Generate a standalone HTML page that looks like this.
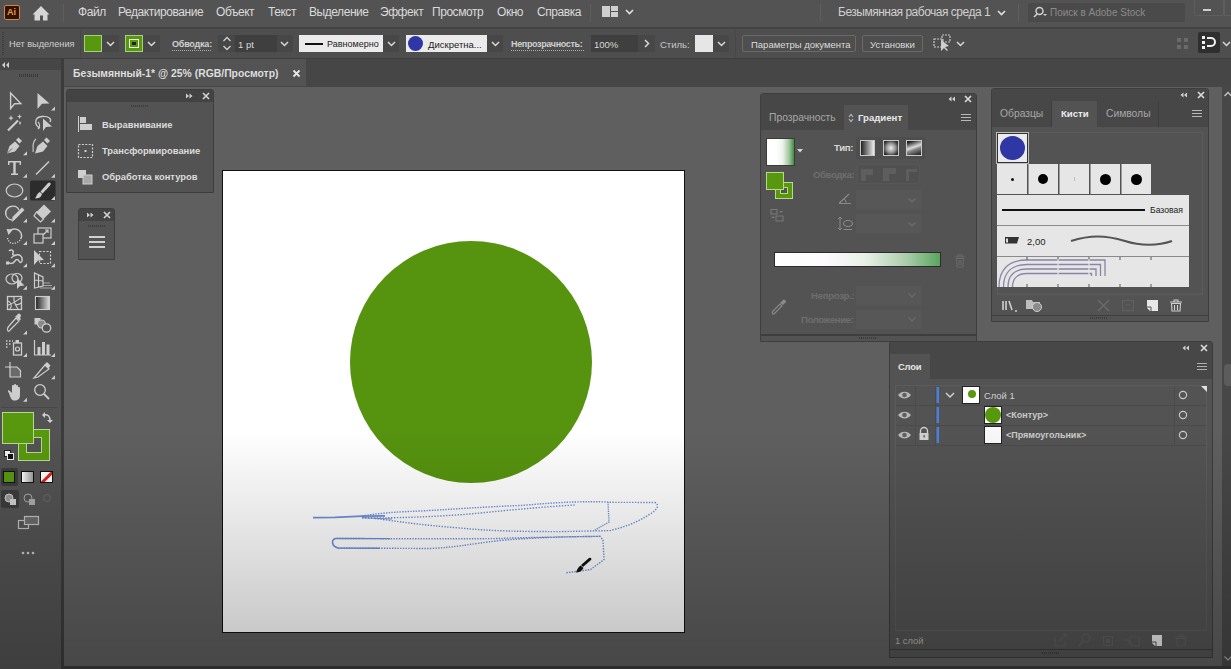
<!DOCTYPE html>
<html><head><meta charset="utf-8">
<style>
*{box-sizing:border-box;margin:0;padding:0}
html,body{width:1231px;height:669px;overflow:hidden;background:#4a4a4a;font-family:"Liberation Sans",sans-serif;color:#d6d6d6}
.a{position:absolute}
.t{position:absolute;white-space:nowrap;line-height:1}
svg{position:absolute;overflow:visible}
</style></head><body>

<!-- menu bar -->
<div class="a" id="menubar" style="left:0;top:0;width:1231px;height:27px;background:#535353"></div>

<!-- menu content -->
<div class="a" style="left:4px;top:5px;width:16px;height:15px;border:1.5px solid #d9863a;border-radius:2px;background:#2e1300"></div>
<div class="t" style="left:7px;top:8px;font-size:9px;font-weight:bold;color:#f19b3c">Ai</div>
<svg style="left:0;top:0" width="1" height="1"><path d="M32.5 14.5 L41 6 L49.5 14.5 L47.5 14.5 L47.5 20.5 L43 20.5 L43 15.5 L40 15.5 L40 20.5 L34.5 20.5 L34.5 14.5 Z" fill="#d6d6d6"/></svg>
<div class="a" style="left:63px;top:4px;width:1px;height:18px;background:#5e5e5e"></div>
<div class="t" style="left:78px;top:6px;font-size:12px;letter-spacing:-0.45px;color:#dadada">Файл</div>
<div class="t" style="left:118px;top:6px;font-size:12px;letter-spacing:-0.45px;color:#dadada">Редактирование</div>
<div class="t" style="left:216px;top:6px;font-size:12px;letter-spacing:-0.45px;color:#dadada">Объект</div>
<div class="t" style="left:268px;top:6px;font-size:12px;letter-spacing:-0.45px;color:#dadada">Текст</div>
<div class="t" style="left:309px;top:6px;font-size:12px;letter-spacing:-0.45px;color:#dadada">Выделение</div>
<div class="t" style="left:380px;top:6px;font-size:12px;letter-spacing:-0.45px;color:#dadada">Эффект</div>
<div class="t" style="left:432px;top:6px;font-size:12px;letter-spacing:-0.45px;color:#dadada">Просмотр</div>
<div class="t" style="left:497px;top:6px;font-size:12px;letter-spacing:-0.45px;color:#dadada">Окно</div>
<div class="t" style="left:537px;top:6px;font-size:12px;letter-spacing:-0.45px;color:#dadada">Справка</div>
<div class="a" style="left:590px;top:4px;width:1px;height:18px;background:#5e5e5e"></div>
<div class="a" style="left:602px;top:6px;width:8px;height:11px;background:#cfcfcf"></div>
<div class="a" style="left:611px;top:6px;width:7px;height:5px;background:#cfcfcf"></div>
<div class="a" style="left:611px;top:12px;width:7px;height:5px;background:#cfcfcf"></div>
<svg style="left:625px;top:9px" width="9" height="6"><path d="M1 1 L4.5 4.5 L8 1" stroke="#e0e0e0" stroke-width="1.6" fill="none"/></svg>
<div class="a" style="left:820px;top:4px;width:1px;height:18px;background:#5e5e5e"></div>
<div class="t" style="left:838px;top:6px;font-size:12px;letter-spacing:-0.5px;color:#cfcfcf">Безымянная рабочая среда 1</div>
<svg style="left:997px;top:10px" width="9" height="6"><path d="M1 1 L4.5 4.5 L8 1" stroke="#e0e0e0" stroke-width="1.6" fill="none"/></svg>
<div class="a" style="left:1018px;top:4px;width:1px;height:18px;background:#5e5e5e"></div>
<div class="a" style="left:1028px;top:3px;width:157px;height:19px;background:#4a4a4a;border-radius:2px"></div>
<svg style="left:1032px;top:6px" width="16" height="12"><circle cx="7.5" cy="5" r="3.5" stroke="#d0d0d0" stroke-width="1.5" fill="none"/><path d="M5 8 L2 11" stroke="#d0d0d0" stroke-width="1.6"/><path d="M11 8 L15 8 L13 10 Z" fill="#d0d0d0"/></svg>
<div class="t" style="left:1050px;top:8px;font-size:10px;color:#8a8a8a">Поиск в Adobe Stock</div>
<div class="a" style="left:1194px;top:-1px;width:30px;height:17px;border:1px solid #5e5e5e;border-radius:2px"></div>
<div class="a" style="left:1203px;top:9px;width:8px;height:2px;background:#cfcfcf"></div>
<div class="a" style="left:1224px;top:-1px;width:10px;height:17px;border:1px solid #5e5e5e"></div>
<!-- control bar -->
<div class="a" id="ctrlbar" style="left:0;top:27px;width:1231px;height:32px;background:#4e4e4e;border-top:2px solid #434343"></div>

<!-- control content -->
<div class="a" style="left:2px;top:32px;width:2px;height:24px;background:repeating-linear-gradient(#3e3e3e 0 1px,transparent 1px 2px)"></div>
<div class="t" style="left:9px;top:40px;font-size:9.2px;color:#cfcfcf">Нет выделения</div>
<div class="a" style="left:80px;top:31px;width:1px;height:26px;background:#474747"></div>
<div class="a" style="left:84px;top:35px;width:18px;height:17px;background:#58980f;border:1px solid #a8cf80"></div>
<div class="a" style="left:102px;top:35px;width:17px;height:17px;background:#474747"></div>
<svg style="left:106px;top:41px" width="9" height="6"><path d="M1 1 L4.5 4.5 L8 1" stroke="#d8d8d8" stroke-width="1.5" fill="none"/></svg>
<div class="a" style="left:125px;top:35px;width:18px;height:17px;background:#58980f;border:1px solid #a8cf80"></div>
<div class="a" style="left:129px;top:39px;width:10px;height:9px;border:1.5px solid #f0f0f0;background:#58980f"></div><div class="a" style="left:132px;top:42px;width:4px;height:3px;background:#222"></div>
<div class="a" style="left:143px;top:35px;width:17px;height:17px;background:#474747"></div>
<svg style="left:147px;top:41px" width="9" height="6"><path d="M1 1 L4.5 4.5 L8 1" stroke="#d8d8d8" stroke-width="1.5" fill="none"/></svg>
<div class="t" style="left:172px;top:40px;font-size:9px;font-weight:bold;letter-spacing:-0.2px;color:#d0d0d0">Обводка:</div>
<div class="a" style="left:172px;top:50px;width:40px;height:1px;background:repeating-linear-gradient(90deg,#aaa 0 1px,transparent 1px 2px)"></div>
<div class="a" style="left:218px;top:35px;width:75px;height:17px;background:#474747"></div>
<svg style="left:222px;top:36px" width="10" height="15"><path d="M1.5 5 L5 1.5 L8.5 5 M1.5 10 L5 13.5 L8.5 10" stroke="#d0d0d0" stroke-width="1.3" fill="none"/></svg>
<div class="a" style="left:235px;top:35px;width:42px;height:17px;background:#3f3f3f"></div>
<div class="t" style="left:238px;top:40px;font-size:9.5px;color:#d8d8d8">1 pt</div>
<svg style="left:280px;top:41px" width="9" height="6"><path d="M1 1 L4.5 4.5 L8 1" stroke="#d8d8d8" stroke-width="1.5" fill="none"/></svg>
<div class="a" style="left:299px;top:35px;width:84px;height:17px;background:#ebebeb"></div>
<div class="a" style="left:305px;top:43px;width:18px;height:2px;background:#111"></div>
<div class="t" style="left:327px;top:40px;font-size:9px;color:#222">Равномерно</div>
<div class="a" style="left:383px;top:35px;width:16px;height:17px;background:#474747"></div>
<svg style="left:387px;top:41px" width="9" height="6"><path d="M1 1 L4.5 4.5 L8 1" stroke="#d8d8d8" stroke-width="1.5" fill="none"/></svg>
<div class="a" style="left:406px;top:35px;width:81px;height:17px;background:#ebebeb"></div>
<div class="a" style="left:408px;top:36px;width:15px;height:15px;border-radius:50%;background:#2f36a6"></div>
<div class="t" style="left:428px;top:40px;font-size:9.5px;color:#222">Дискретна...</div>
<div class="a" style="left:487px;top:35px;width:16px;height:17px;background:#474747"></div>
<svg style="left:491px;top:41px" width="9" height="6"><path d="M1 1 L4.5 4.5 L8 1" stroke="#d8d8d8" stroke-width="1.5" fill="none"/></svg>
<div class="t" style="left:511px;top:40px;font-size:9px;font-weight:bold;letter-spacing:-0.35px;color:#d0d0d0">Непрозрачность:</div>
<div class="a" style="left:511px;top:50px;width:73px;height:1px;background:repeating-linear-gradient(90deg,#aaa 0 1px,transparent 1px 2px)"></div>
<div class="a" style="left:591px;top:35px;width:64px;height:17px;background:#474747"></div>
<div class="a" style="left:591px;top:35px;width:47px;height:17px;background:#3f3f3f"></div>
<div class="t" style="left:594px;top:40px;font-size:9.5px;color:#d8d8d8">100%</div>
<svg style="left:644px;top:39px" width="6" height="9"><path d="M1 1 L4.5 4.5 L1 8" stroke="#d8d8d8" stroke-width="1.5" fill="none"/></svg>
<div class="t" style="left:660px;top:40px;font-size:9.5px;color:#c8c8c8">Стиль:</div>
<div class="a" style="left:695px;top:35px;width:18px;height:17px;background:#e6e6e6"></div>
<div class="a" style="left:713px;top:35px;width:16px;height:17px;background:#474747"></div>
<svg style="left:717px;top:41px" width="9" height="6"><path d="M1 1 L4.5 4.5 L8 1" stroke="#d8d8d8" stroke-width="1.5" fill="none"/></svg>
<div class="a" style="left:735px;top:31px;width:1px;height:26px;background:#474747"></div>
<div class="a" style="left:742px;top:35px;width:114px;height:17px;border:1px solid #6a6a6a;border-radius:2px"></div>
<div class="t" style="left:751px;top:40px;font-size:9.5px;color:#dcdcdc">Параметры документа</div>
<div class="a" style="left:862px;top:35px;width:61px;height:17px;border:1px solid #6a6a6a;border-radius:2px"></div>
<div class="t" style="left:870px;top:40px;font-size:9.5px;color:#dcdcdc">Установки</div>
<svg style="left:933px;top:34px" width="20" height="18"><rect x="1" y="5" width="9" height="8" fill="none" stroke="#c8c8c8" stroke-width="1.2" stroke-dasharray="2 1"/><rect x="9" y="1" width="8" height="7" fill="none" stroke="#c8c8c8" stroke-width="1.2" stroke-dasharray="2 1"/><path d="M8 6 L8 17 L11 14 L14 17 L15 16 L12 13 L16 12 Z" fill="#d0d0d0"/></svg>
<svg style="left:956px;top:41px" width="9" height="6"><path d="M1 1 L4.5 4.5 L8 1" stroke="#d8d8d8" stroke-width="1.5" fill="none"/></svg>
<svg style="left:1176px;top:37px" width="14" height="14"><rect x="1" y="1" width="4" height="4" fill="#6a6a6a"/><rect x="8" y="1" width="4" height="4" fill="#6a6a6a"/><rect x="1" y="8" width="4" height="4" fill="#6a6a6a"/><rect x="8" y="8" width="4" height="4" fill="#6a6a6a"/></svg>
<div class="a" style="left:1198px;top:32px;width:22px;height:21px;background:#2f2f2f;border-radius:2px"></div>
<svg style="left:1201px;top:35px" width="16" height="16"><rect x="1" y="1" width="3" height="3" fill="#f0f0f0"/><rect x="1" y="6" width="3" height="3" fill="#f0f0f0"/><rect x="1" y="11" width="3" height="3" fill="#f0f0f0"/><path d="M6 3 L10 3 A4 4 0 0 1 10 11 L6 11" stroke="#f0f0f0" stroke-width="2" fill="none"/></svg>
<svg style="left:1222px;top:41px" width="9" height="6"><path d="M1 1 L4.5 4.5 L8 1" stroke="#d8d8d8" stroke-width="1.5" fill="none"/></svg>
<!-- tab bar -->
<div class="a" id="tabbar" style="left:0;top:59px;width:1231px;height:28px;background:#464646"></div>
<div class="a" style="left:64px;top:59px;width:242px;height:27px;background:#535353"></div>
<div class="a" style="left:0;top:58px;width:1231px;height:1px;background:#3e3e3e"></div>
<!-- canvas -->
<div class="a" id="canvas" style="left:64px;top:87px;width:1158px;height:582px;background:#5f5f5f"></div>
<!-- toolbar -->
<div class="a" id="toolbar" style="left:0;top:59px;width:61px;height:610px;background:#535353"></div>
<div class="a" style="left:0;top:59px;width:61px;height:11px;background:#464646"></div>
<div class="a" style="left:61px;top:59px;width:3px;height:610px;background:#3c3c3c"></div>
<!-- right dock -->
<div class="a" style="left:1222px;top:87px;width:9px;height:582px;background:#474747"></div>
<!-- artboard -->
<div class="a" id="artboard" style="left:222px;top:170px;width:463px;height:463px;background:#fff;border:1px solid #111"></div>
<div class="a" style="left:350px;top:241px;width:242px;height:242px;border-radius:50%;background:#56930f"></div>
<svg style="left:1px;top:61px" width="10" height="8"><path d="M4 1 L1 4 L4 7 Z M8 1 L5 4 L8 7 Z" fill="#d0d0d0"/></svg>
<div class="a" style="left:19px;top:74px;width:19px;height:3px;background:repeating-linear-gradient(90deg,#3a3a3a 0 1px,transparent 1px 2px)"></div>
<svg style="left:0;top:0" width="61" height="669"><path d="M10.6 93 L10.6 108.5 L14.6 103.8 L20.8 103.6 Z" fill="none" stroke="#cdcdcd" stroke-width="1.4" stroke-linejoin="miter"/><path d="M37.5 93 L37.5 109 L42 103.8 L49.5 103.5 Z" fill="#cdcdcd"/><path d="M55.0 106.5 L55.0 110.5 L51.0 110.5 Z" fill="#cdcdcd"/><path d="M8 130.5 L18 120.5" stroke="#cdcdcd" stroke-width="2.2"/><path d="M11 115 L11.8 117.5 L14 118 L11.8 118.7 L11 121 L10.2 118.7 L8 118 L10.2 117.5 Z" fill="#cdcdcd"/><path d="M19.5 114 L20.2 116 L22 116.5 L20.2 117.2 L19.5 119 L18.8 117.2 L17 116.5 L18.8 116 Z" fill="#cdcdcd"/><path d="M20 121 L21 123 L20 125 L19 123 Z" fill="#cdcdcd"/><path d="M40 128 C34 125 34 117 42 116.5 C49 116 52 119 50 122" fill="none" stroke="#cdcdcd" stroke-width="1.3"/><path d="M38 122 C40 124 40 127 38 129" fill="none" stroke="#cdcdcd" stroke-width="1.2"/><path d="M43 118.5 L43 131 L46 127 L52 126.5 Z" fill="#cdcdcd"/><path d="M7 153.5 L9.5 146 L15 141.5 L19.5 146 L15 151.5 Z" fill="#cdcdcd"/><path d="M16 140 L18.5 137.5 L22 141 L19.5 143.5 Z" fill="#cdcdcd"/><path d="M7.5 153 L12 148.5" stroke="#535353" stroke-width="0.9"/><path d="M27.0 151.3 L27.0 155.3 L23.0 155.3 Z" fill="#cdcdcd"/><path d="M35 153.5 L37.5 146 L43 141.5 L47.5 146 L43 151.5 Z" fill="#cdcdcd"/><path d="M44 140 L46.5 137.5 L50 141 L47.5 143.5 Z" fill="#cdcdcd"/><path d="M36 139 C31 143 34 148 33 152" fill="none" stroke="#cdcdcd" stroke-width="1.1"/><path d="M8 161 H21 V165 H19.6 V162.6 H15.7 V173.6 H18 V175 H11 V173.6 H13.3 V162.6 H9.4 V165 H8 Z" fill="#cdcdcd"/><path d="M27.0 173.7 L27.0 177.7 L23.0 177.7 Z" fill="#cdcdcd"/><path d="M36 174.5 L49 161.5" stroke="#cdcdcd" stroke-width="1.5"/><path d="M55.0 173.7 L55.0 177.7 L51.0 177.7 Z" fill="#cdcdcd"/><ellipse cx="14.5" cy="190.5" rx="8.3" ry="6.5" fill="#5a5a5a" stroke="#cdcdcd" stroke-width="1.2"/><path d="M27.0 196.1 L27.0 200.1 L23.0 200.1 Z" fill="#cdcdcd"/><rect x="30" y="180.5" width="25.5" height="20" rx="2" fill="#2c2c2c"/><path d="M49.5 182.5 C51 183 51 184 50 185.5 L42.5 193.5 L40.5 191.5 L48 183 Z" fill="#cdcdcd"/><path d="M40 192 L42 194 C41.5 197 39 198.5 35 198.5 C36.5 197 37 193 40 192 Z" fill="#cdcdcd"/><path d="M55.0 196.1 L55.0 200.1 L51.0 200.1 Z" fill="#cdcdcd"/><path d="M12 220 C6 219 4 213 7 209 C10 205 17 205 19 210" fill="#5a5a5a" stroke="#cdcdcd" stroke-width="1.3"/><path d="M12 222 L12.5 217 L22 207.5 L24.5 210 L15 219.5 Z" fill="#cdcdcd"/><path d="M27.0 218.5 L27.0 222.5 L23.0 222.5 Z" fill="#cdcdcd"/><path d="M44 204.5 L51 211.5 L43.5 219 L36.5 212 Z" fill="#cdcdcd"/><path d="M36.5 212 L43.5 219 L40.5 222 L34 216 Z" fill="none" stroke="#cdcdcd" stroke-width="1.2"/><path d="M55.0 218.5 L55.0 222.5 L51.0 222.5 Z" fill="#cdcdcd"/><path d="M10 230.5 C13 228 19 228.5 21 233 C22 236 21.5 238 20.5 239" fill="none" stroke="#cdcdcd" stroke-width="1.4"/><path d="M20 240 C18 243 14 244 11 243 C9 242 8 240 7.5 238" fill="none" stroke="#cdcdcd" stroke-width="1.3" stroke-dasharray="1.2 1.3"/><path d="M6.5 229 L13 229.5 L8.5 235 Z" fill="#cdcdcd"/><path d="M27.0 240.89999999999998 L27.0 244.89999999999998 L23.0 244.89999999999998 Z" fill="#cdcdcd"/><rect x="38" y="228" width="13" height="10" fill="none" stroke="#cdcdcd" stroke-width="1.2"/><rect x="34" y="234" width="9" height="9" fill="#535353" stroke="#cdcdcd" stroke-width="1.2"/><path d="M43 235 L48 230 M45 230 H48 V233" stroke="#cdcdcd" stroke-width="1.2" fill="none"/><path d="M55.0 240.89999999999998 L55.0 244.89999999999998 L51.0 244.89999999999998 Z" fill="#cdcdcd"/><path d="M9 251 C11 249 14 250 13 253 C12 255 14 256 16 255 C19 254 23 256 22 261 C21 263 20 263 19 261 C18 259 16 259 15 261 C13 264 10 264 8 262" fill="none" stroke="#cdcdcd" stroke-width="1.5"/><path d="M11 258 L15 255" stroke="#cdcdcd" stroke-width="1.2"/><rect x="6" y="261.5" width="3" height="3" fill="#cdcdcd"/><path d="M27.0 263.29999999999995 L27.0 267.29999999999995 L23.0 267.29999999999995 Z" fill="#cdcdcd"/><path d="M34 250 L34 265 L38 260.5 L44 260 Z" fill="#cdcdcd"/><rect x="39.5" y="251.5" width="11" height="12" fill="none" stroke="#cdcdcd" stroke-width="1.2" stroke-dasharray="2 1.5"/><path d="M55.0 263.29999999999995 L55.0 267.29999999999995 L51.0 267.29999999999995 Z" fill="#cdcdcd"/><ellipse cx="12" cy="279" rx="6" ry="5" fill="none" stroke="#cdcdcd" stroke-width="1.2"/><ellipse cx="17" cy="278" rx="5" ry="4.5" fill="none" stroke="#cdcdcd" stroke-width="1.2"/><path d="M17 278 L17 289 L20 286 L24.5 285.5 Z" fill="#cdcdcd"/><path d="M27.0 285.7 L27.0 289.7 L23.0 289.7 Z" fill="#cdcdcd"/><path d="M34.5 273 L34.5 288 L43 286 L43 277 Z M34.5 280 L43 281 M38.5 275 L38.5 287" fill="none" stroke="#cdcdcd" stroke-width="1.2"/><path d="M43 283 L50 283 M43 285.5 L52 285.5 M40 288 L52 288" stroke="#cdcdcd" stroke-width="1" opacity="0.7"/><path d="M55.0 285.7 L55.0 289.7 L51.0 289.7 Z" fill="#cdcdcd"/><rect x="7.5" y="296.5" width="14" height="13" fill="none" stroke="#cdcdcd" stroke-width="1.3"/><path d="M8 301 C12 303 12 306 10 309 M14 297 C13 302 16 306 18 309 M8 305 C13 304 17 300 21 298 M15 304 C17 305 19 305 21 303" fill="none" stroke="#cdcdcd" stroke-width="1.1"/><defs><linearGradient id="tg" x1="0" x2="1"><stop offset="0" stop-color="#222"/><stop offset="1" stop-color="#ddd"/></linearGradient></defs><rect x="35.5" y="296.5" width="14" height="13" fill="url(#tg)" stroke="#cdcdcd" stroke-width="1.1"/><path d="M8 331 C7 329 8 327 9 326 L16 318 L19 321 L11 329 C10 330 9 332 8 331 Z" fill="none" stroke="#cdcdcd" stroke-width="1.2"/><path d="M15.5 316.5 L18 314 C19 313 21 314 21 316 L20 318 L21 319 L19.5 320.5 L14.5 316 Z" fill="#cdcdcd"/><path d="M27.0 330.5 L27.0 334.5 L23.0 334.5 Z" fill="#cdcdcd"/><rect x="34.5" y="318" width="6" height="6.5" fill="#cdcdcd"/><circle cx="41.5" cy="324" r="4" fill="#8a8a8a" stroke="#cdcdcd" stroke-width="1.1"/><circle cx="46.5" cy="328" r="4.2" fill="#535353" stroke="#cdcdcd" stroke-width="1.3"/><rect x="13.5" y="343" width="8" height="12" fill="none" stroke="#cdcdcd" stroke-width="1.3"/><rect x="15.5" y="340" width="3.5" height="3" fill="#cdcdcd"/><circle cx="17.5" cy="349" r="2" fill="none" stroke="#cdcdcd" stroke-width="1.2"/><path d="M6 341 h1.5 M9 341 h1.5 M6 344 h1.5 M9 344 h1.5 M6 347 h1.5 M12 341 h1" stroke="#cdcdcd" stroke-width="1.4"/><path d="M27.0 352.9 L27.0 356.9 L23.0 356.9 Z" fill="#cdcdcd"/><path d="M34.5 340 V355 H51" fill="none" stroke="#cdcdcd" stroke-width="1.2"/><rect x="37.5" y="347" width="3" height="8" fill="#cdcdcd"/><rect x="42" y="342" width="3" height="13" fill="#cdcdcd"/><rect x="46.5" y="344.5" width="3" height="10.5" fill="#cdcdcd"/><path d="M55.0 352.9 L55.0 356.9 L51.0 356.9 Z" fill="#cdcdcd"/><path d="M10 362 V368 M5 367 H10" stroke="#cdcdcd" stroke-width="1.2"/><path d="M10 367 H17 L20.5 370.5 V377 H10 Z" fill="#6a6a6a" stroke="#cdcdcd" stroke-width="1.2"/><path d="M34 378 L45 365 L49 369 L38 377 Z" fill="none" stroke="#cdcdcd" stroke-width="1.2"/><path d="M44.5 364.5 L47 362 L50.5 365.5 L48.5 368.5 Z" fill="#cdcdcd"/><path d="M55.0 375.29999999999995 L55.0 379.29999999999995 L51.0 379.29999999999995 Z" fill="#cdcdcd"/><path d="M9 393 C7 391 8 389 10 391 L12 393 V386 C12 384.5 14 384.5 14 386 V385 C14 383.5 16 383.5 16 385 V386 C16 384.5 18 384.5 18 386 V388 C18 386.5 20 386.5 20 388 V395 C20 399 18 400.5 14.5 400.5 C11.5 400.5 10.5 398 9 393 Z" fill="#cdcdcd"/><path d="M27.0 397.7 L27.0 401.7 L23.0 401.7 Z" fill="#cdcdcd"/><circle cx="40" cy="390" r="5.3" fill="none" stroke="#cdcdcd" stroke-width="1.3"/><path d="M44 394 L49 399" stroke="#cdcdcd" stroke-width="1.8"/></svg>
<div class="a" style="left:1px;top:407px;width:56px;height:1px;background:#474747"></div>
<div class="a" style="left:18px;top:429px;width:32px;height:32px;background:#58980f;border:1px solid #b5d98c"></div>
<div class="a" style="left:26px;top:437px;width:16px;height:16px;background:#535353;border:1px solid #b5d98c"></div>
<div class="a" style="left:2px;top:412px;width:32px;height:32px;background:#58980f;border:1px solid #b5d98c"></div>
<svg style="left:41px;top:411px" width="12" height="12"><path d="M2 4 C7 3 9 5 9 10" fill="none" stroke="#d0d0d0" stroke-width="1.4"/><path d="M1 4 L4 1 L4 7 Z M6 9 L12 9 L9 12 Z" fill="#d0d0d0"/></svg>
<div class="a" style="left:4px;top:450px;width:7px;height:7px;background:#f0f0f0;border:1px solid #222"></div>
<div class="a" style="left:7px;top:453px;width:7px;height:7px;background:#111;border:1px solid #eee"></div>
<div class="a" style="left:1px;top:468px;width:17px;height:18px;background:#3c3c3c;border-radius:2px"></div>
<div class="a" style="left:3px;top:471px;width:12px;height:12px;background:#58980f;border:1px solid #111"></div>
<div class="a" style="left:21px;top:471px;width:13px;height:12px;background:linear-gradient(90deg,#fff,#9a9a9a);border:1px solid #111"></div>
<div class="a" style="left:40px;top:471px;width:13px;height:12px;background:#fff;border:1px solid #111;overflow:hidden"><div class="a" style="left:-3px;top:4px;width:18px;height:2.5px;background:#e0201a;transform:rotate(-45deg)"></div></div>
<div class="a" style="left:1px;top:490px;width:18px;height:18px;background:#3c3c3c;border-radius:2px"></div>
<svg style="left:0;top:0" width="61" height="669"><circle cx="9" cy="498" r="4" fill="#999" stroke="#d0d0d0" stroke-width="1"/><rect x="10" y="499" width="6" height="6" fill="#d0d0d0"/><circle cx="28" cy="498" r="4" fill="none" stroke="#aaa" stroke-width="1"/><rect x="29" y="499" width="6" height="6" fill="#aaa"/><circle cx="47" cy="498" r="3.5" fill="none" stroke="#6a6a6a" stroke-width="1"/>
<rect x="18.5" y="520.5" width="10" height="8" fill="none" stroke="#c0c0c0" stroke-width="1.2"/><rect x="24.5" y="516.5" width="14" height="8" fill="#6a6a6a" stroke="#c0c0c0" stroke-width="1.2"/>
<circle cx="23" cy="553" r="1.3" fill="#c8c8c8"/><circle cx="28" cy="553" r="1.3" fill="#c8c8c8"/><circle cx="33" cy="553" r="1.3" fill="#c8c8c8"/></svg>
<div class="t" style="left:73px;top:69px;font-size:10.4px;font-weight:bold;color:#dedede">Безымянный-1* @ 25% (RGB/Просмотр)</div>
<svg style="left:292px;top:69px" width="9" height="9"><path d="M1.5 1.5 L7.5 7.5 M7.5 1.5 L1.5 7.5" stroke="#e8e8e8" stroke-width="1.8"/></svg>
<div class="a" style="left:66px;top:89px;width:148px;height:104px;background:#535353;border:1px solid #3d3d3d;border-radius:3px 3px 0 0"></div>
<div class="a" style="left:67px;top:90px;width:146px;height:12px;background:#434343;border-radius:2px 2px 0 0"></div>
<svg style="left:185px;top:93px" width="8" height="6"><path d="M1 0.5 L4 3 L1 5.5 Z M4.5 0.5 L7.5 3 L4.5 5.5 Z" fill="#d0d0d0"/></svg>
<svg style="left:202px;top:92px" width="8" height="8"><path d="M1 1 L7 7 M7 1 L1 7" stroke="#d0d0d0" stroke-width="1.7"/></svg>
<div class="a" style="left:131px;top:105px;width:18px;height:2px;background:repeating-linear-gradient(90deg,#3d3d3d 0 1px,transparent 1px 2px)"></div>
<svg style="left:0;top:0" width="230" height="270"><rect x="78" y="116" width="1" height="16" fill="#cfcfcf"/><rect x="80" y="117" width="6" height="6" fill="#cfcfcf"/><rect x="80" y="124" width="12" height="6" fill="#cfcfcf"/><rect x="78.5" y="144.5" width="14" height="13" fill="none" stroke="#cfcfcf" stroke-width="1.2" stroke-dasharray="2 1.4"/><rect x="84.5" y="150" width="2" height="2" fill="#cfcfcf"/><rect x="78" y="170" width="8" height="8" fill="#cfcfcf"/><rect x="83" y="175" width="9" height="9" fill="#a8a8a8" stroke="#cfcfcf" stroke-width="1"/></svg>
<div class="t" style="left:102px;top:120px;font-size:9.4px;font-weight:bold;color:#dcdcdc">Выравнивание</div>
<div class="t" style="left:102px;top:146px;font-size:9.4px;font-weight:bold;color:#dcdcdc">Трансформирование</div>
<div class="t" style="left:102px;top:172px;font-size:9.4px;font-weight:bold;color:#dcdcdc">Обработка контуров</div>
<div class="a" style="left:78px;top:208px;width:37px;height:52px;background:#535353;border:1px solid #3d3d3d;border-radius:3px 3px 0 0"></div>
<div class="a" style="left:79px;top:209px;width:35px;height:12px;background:#434343;border-radius:2px 2px 0 0"></div>
<svg style="left:86px;top:212px" width="8" height="6"><path d="M1 0.5 L4 3 L1 5.5 Z M4.5 0.5 L7.5 3 L4.5 5.5 Z" fill="#d0d0d0"/></svg>
<svg style="left:103px;top:211px" width="8" height="8"><path d="M1 1 L7 7 M7 1 L1 7" stroke="#d0d0d0" stroke-width="1.7"/></svg>
<div class="a" style="left:88px;top:225px;width:18px;height:2px;background:repeating-linear-gradient(90deg,#3d3d3d 0 1px,transparent 1px 2px)"></div>
<div class="a" style="left:89px;top:236px;width:16px;height:2px;background:#d0d0d0"></div>
<div class="a" style="left:89px;top:241px;width:16px;height:2px;background:#d0d0d0"></div>
<div class="a" style="left:89px;top:246px;width:16px;height:2px;background:#d0d0d0"></div>
<div class="a" style="left:760px;top:93px;width:217px;height:249px;background:#535353;border:1px solid #3e3e3e;border-radius:3px 3px 0 0"></div>
<div class="a" style="left:761px;top:94px;width:215px;height:11px;background:#474747;border-radius:2px 2px 0 0"></div>
<div class="a" style="left:761px;top:105px;width:215px;height:25px;background:#474747"></div>
<div class="a" style="left:844px;top:105px;width:64px;height:25px;background:#535353"></div>
<div class="a" style="left:761px;top:334px;width:215px;height:2px;background:#3e3e3e"></div>
<div class="a" style="left:859px;top:337px;width:18px;height:2px;background:repeating-linear-gradient(90deg,#3d3d3d 0 1px,transparent 1px 2px)"></div>
<svg style="left:948px;top:96px" width="8" height="6"><path d="M3.5 0.5 L0.5 3 L3.5 5.5 Z M7 0.5 L4 3 L7 5.5 Z" fill="#d0d0d0"/></svg>
<svg style="left:964px;top:95px" width="8" height="8"><path d="M1 1 L7 7 M7 1 L1 7" stroke="#d8d8d8" stroke-width="1.7"/></svg>
<div class="t" style="left:769px;top:113px;font-size:10.3px;color:#a8a8a8">Прозрачность</div>
<svg style="left:848px;top:113px" width="6" height="10"><path d="M1 4 L3 1.5 L5 4 M1 6 L3 8.5 L5 6" stroke="#bbb" stroke-width="1.1" fill="none"/></svg>
<div class="t" style="left:858px;top:113px;font-size:9.6px;font-weight:bold;color:#e8e8e8">Градиент</div>
<div class="a" style="left:961px;top:114px;width:10px;height:1px;background:#b8b8b8;box-shadow:0 3px 0 #b8b8b8,0 6px 0 #b8b8b8"></div>
<div class="a" style="left:766px;top:138px;width:29px;height:28px;background:linear-gradient(90deg,#fff 0,#fff 35%,#eef3ec 58%,#9fc59e 82%,#3f8c3f 100%);border:1px solid #3a3a3a"></div>
<svg style="left:797px;top:149px" width="6" height="4"><path d="M0 0 L6 0 L3 3.5 Z" fill="#d8d8d8"/></svg>
<div class="a" style="left:775px;top:182px;width:18px;height:17px;background:#58980f;border:1px solid #b5d98c"></div>
<div class="a" style="left:780px;top:187px;width:8px;height:7px;background:#535353;border:1px solid #b5d98c"></div>
<div class="a" style="left:766px;top:172px;width:18px;height:18px;background:#58980f;border:1px solid #b5d98c"></div>
<svg style="left:770px;top:209px" width="16" height="14"><rect x="1" y="0.5" width="6" height="4.5" fill="none" stroke="#7a7a7a"/><path d="M9 2 L13 2 L11 4 Z M1 9 L3 7 L5 9 Z" fill="#7a7a7a"/><rect x="6" y="7" width="7" height="5" fill="none" stroke="#7a7a7a"/></svg>
<div class="t" style="left:834px;top:143px;font-size:9.6px;font-weight:bold;color:#d8d8d8;letter-spacing:-0.3px">Тип:</div>
<div class="a" style="left:856px;top:137px;width:69px;height:22px;background:#4e4e4e;border-radius:2px"></div>
<div class="a" style="left:860px;top:140px;width:15px;height:16px;background:linear-gradient(90deg,#222,#eee);border:1px solid #c8c8c8"></div>
<div class="a" style="left:883px;top:140px;width:16px;height:16px;background:radial-gradient(circle,#eee 0,#999 45%,#333 80%);border:1px solid #c8c8c8"></div>
<div class="a" style="left:906px;top:140px;width:16px;height:16px;background:linear-gradient(160deg,#222 10%,#ddd 45%,#888 60%,#333 90%);border:1px solid #c8c8c8"></div>
<div class="t" style="left:813px;top:170px;font-size:9.6px;font-weight:bold;color:#6e6e6e;letter-spacing:-0.4px">Обводка:</div>
<div class="a" style="left:857px;top:164px;width:63px;height:20px;background:#505050;border:1px solid #575757;border-radius:2px"></div>
<svg style="left:0;top:0" width="1" height="1"><path d="M861 181 V169 H873 V175 H866 V181 Z M883 181 V168 L896 168 V174 H889 V181" fill="#5e5e5e"/><path d="M906 181 V169 H917 V172 H909 V181 Z" fill="#5e5e5e"/></svg>
<svg style="left:838px;top:192px" width="14" height="13"><path d="M1 11.5 H13 M1 11.5 L11 2" stroke="#8a8a8a" stroke-width="1.2" fill="none"/><path d="M6 7 C8 8 8 10 8 11.5" stroke="#8a8a8a" fill="none"/></svg>
<div class="a" style="left:856px;top:190px;width:65px;height:19px;background:#575757"></div>
<svg style="left:908px;top:198px" width="8" height="5"><path d="M0.5 0.5 L4 4 L7.5 0.5" stroke="#6e6e6e" stroke-width="1.1" fill="none"/></svg>
<svg style="left:837px;top:216px" width="16" height="15"><path d="M3 1 V14 M1 3 L3 1 L5 3 M1 12 L3 14 L5 12" stroke="#8a8a8a" stroke-width="1" fill="none"/><ellipse cx="11" cy="7.5" rx="4.5" ry="3" fill="none" stroke="#8a8a8a" stroke-width="1.1"/><path d="M6.5 13.5 H15" stroke="#8a8a8a"/></svg>
<div class="a" style="left:856px;top:214px;width:65px;height:19px;background:#575757"></div>
<svg style="left:908px;top:222px" width="8" height="5"><path d="M0.5 0.5 L4 4 L7.5 0.5" stroke="#6e6e6e" stroke-width="1.1" fill="none"/></svg>
<div class="a" style="left:774px;top:252px;width:167px;height:15px;background:linear-gradient(90deg,#fff 0,#fdfbfd 30%,#e8f0e6 55%,#a9ccaa 80%,#5aa55e);border:1px solid #2c2c2c"></div>
<svg style="left:954px;top:254px" width="12" height="14"><path d="M1 3 H11 M4 3 V1 H8 V3 M2.5 4.5 H9.5 L9 13 H3 Z" stroke="#6a6a6a" stroke-width="1" fill="none"/><path d="M5 6 V11 M7 6 V11" stroke="#6a6a6a"/></svg>
<div class="t" style="left:811px;top:291px;font-size:9.6px;font-weight:bold;color:#6e6e6e;letter-spacing:-0.3px">Непрозр.:</div>
<div class="a" style="left:856px;top:286px;width:65px;height:19px;background:#575757"></div>
<svg style="left:908px;top:293px" width="8" height="5"><path d="M0.5 0.5 L4 4 L7.5 0.5" stroke="#6e6e6e" stroke-width="1.1" fill="none"/></svg>
<div class="t" style="left:801px;top:315px;font-size:9.6px;font-weight:bold;color:#6e6e6e;letter-spacing:-0.4px">Положение:</div>
<div class="a" style="left:856px;top:310px;width:65px;height:19px;background:#575757"></div>
<svg style="left:908px;top:317px" width="8" height="5"><path d="M0.5 0.5 L4 4 L7.5 0.5" stroke="#6e6e6e" stroke-width="1.1" fill="none"/></svg>
<svg style="left:771px;top:299px" width="16" height="17"><path d="M2 15 C1 14 1 13 2 12 L9 5 L11 7 L4 14 C3 15 2.5 15.5 2 15 Z" fill="none" stroke="#8a8a8a" stroke-width="1.1"/><path d="M9 4 L12 1 C13 0 15 1 15 3 L12 6 Z" fill="#8a8a8a"/></svg>
<div class="a" style="left:991px;top:88px;width:218px;height:234px;background:#535353;border:1px solid #3e3e3e;border-radius:3px 3px 0 0"></div>
<div class="a" style="left:992px;top:89px;width:216px;height:12px;background:#474747;border-radius:2px 2px 0 0"></div>
<div class="a" style="left:992px;top:101px;width:216px;height:26px;background:#474747"></div>
<div class="a" style="left:1052px;top:101px;width:45px;height:26px;background:#535353"></div>
<div class="a" style="left:1158px;top:101px;width:1px;height:26px;background:#3e3e3e"></div>
<div class="a" style="left:1051px;top:101px;width:1px;height:26px;background:#3e3e3e"></div>
<svg style="left:1180px;top:92px" width="8" height="6"><path d="M3.5 0.5 L0.5 3 L3.5 5.5 Z M7 0.5 L4 3 L7 5.5 Z" fill="#d0d0d0"/></svg>
<svg style="left:1197px;top:91px" width="8" height="8"><path d="M1 1 L7 7 M7 1 L1 7" stroke="#d8d8d8" stroke-width="1.7"/></svg>
<div class="t" style="left:1000px;top:109px;font-size:10.3px;color:#a8a8a8">Образцы</div>
<div class="t" style="left:1061px;top:109px;font-size:9.6px;font-weight:bold;color:#ececec">Кисти</div>
<div class="t" style="left:1106px;top:109px;font-size:10.3px;color:#a8a8a8">Символы</div>
<div class="a" style="left:1192px;top:110px;width:10px;height:1px;background:#b8b8b8;box-shadow:0 3px 0 #b8b8b8,0 6px 0 #b8b8b8"></div>
<div class="a" style="left:997px;top:132px;width:206px;height:163px;border:1px solid #5c5c5c"></div>
<div class="a" style="left:997px;top:133px;width:31px;height:30px;background:#ebebeb;border:1px solid #333;outline:1px solid #bdbdbd"></div>
<div class="a" style="left:1000px;top:136px;width:25px;height:24px;border-radius:50%;background:#2e37a4"></div>
<div class="a" style="left:997px;top:164px;width:30px;height:30px;background:#e6e6e6"></div>
<div class="a" style="left:1028px;top:164px;width:30px;height:30px;background:#e6e6e6"></div>
<div class="a" style="left:1059px;top:164px;width:30px;height:30px;background:#e6e6e6"></div>
<div class="a" style="left:1090px;top:164px;width:30px;height:30px;background:#e6e6e6"></div>
<div class="a" style="left:1121px;top:164px;width:30px;height:30px;background:#e6e6e6"></div>
<div class="a" style="left:1011px;top:178px;width:3px;height:3px;border-radius:50%;background:#111"></div>
<div class="a" style="left:1038px;top:174px;width:10px;height:10px;border-radius:50%;background:#000"></div>
<div class="a" style="left:1074px;top:177px;width:1px;height:4px;background:#bbb"></div>
<div class="a" style="left:1100px;top:174px;width:11px;height:11px;border-radius:50%;background:#000"></div>
<div class="a" style="left:1131px;top:174px;width:11px;height:11px;border-radius:50%;background:#000"></div>
<div class="a" style="left:1028px;top:164px;width:1px;height:30px;background:#9a9a9a"></div>
<div class="a" style="left:1059px;top:164px;width:1px;height:30px;background:#9a9a9a"></div>
<div class="a" style="left:1090px;top:164px;width:1px;height:30px;background:#9a9a9a"></div>
<div class="a" style="left:1121px;top:164px;width:1px;height:30px;background:#9a9a9a"></div>
<div class="a" style="left:997px;top:195px;width:192px;height:30px;background:#e6e6e6"></div>
<div class="a" style="left:1002px;top:209px;width:143px;height:2px;background:#111"></div>
<div class="t" style="left:1150px;top:206px;font-size:8.6px;color:#222">Базовая</div>
<div class="a" style="left:997px;top:225px;width:192px;height:1px;background:#8a8a8a"></div>
<div class="a" style="left:997px;top:226px;width:192px;height:30px;background:#e6e6e6"></div>
<svg style="left:1004px;top:236px" width="18" height="9"><path d="M1 1 H15 L13 7.5 H1 Z" fill="#333"/><rect x="2" y="2.5" width="2" height="4" fill="#ddd"/></svg>
<div class="t" style="left:1027px;top:237px;font-size:9.5px;color:#222">2,00</div>
<svg style="left:1070px;top:233px" width="104" height="16"><path d="M1 8 C20 2 35 2 55 8 C70 13 88 13 102 8" stroke="#555" stroke-width="2.2" fill="none"/></svg>
<div class="a" style="left:997px;top:256px;width:192px;height:1px;background:#8a8a8a"></div>
<div class="a" style="left:997px;top:257px;width:192px;height:30px;background:#e6e6e6"></div>
<svg style="left:997px;top:257px" width="192" height="30"><g fill="none" stroke="#8a84a6" stroke-width="1.3"><path d="M2 30 C2 12 12 3 30 3 H93 M6.5 30 C6.5 15 15 7.5 30 7.5 H93 M11 30 C11 18 18 12 30 12 H93 M15.5 30 C15.5 21 21 16.5 30 16.5 H93"/><path d="M93 3 H108 V19 M93 7.5 H103.5 V19 M93 12 H99 V19 M93 16.5 H94.5 V19"/></g><path d="M30 0 V3 M61 0 V3 M92 0 V3 M123 0 V3 M154 0 V3 M30 27 V30 M61 27 V30 M92 27 V30 M123 27 V30 M154 27 V30" stroke="#555" stroke-width="1"/><path d="M61 2 V18 M92 2 V18" stroke="#e6e6e6" stroke-width="1.2"/></svg>
<svg style="left:0;top:0" width="1" height="1"><path d="M1003 310 V301 M1006 310 V301 M1009 301 L1012 310 M1015 311 H1017" stroke="#cfcfcf" stroke-width="1.6" fill="none"/><path d="M1026 300 H1032 L1033 302 H1040 V309 H1026 Z" fill="#bdbdbd"/><circle cx="1037" cy="307" r="4.5" fill="#8a8a8a" stroke="#cfcfcf" stroke-width="1"/><path d="M1098 300 L1109 311 M1109 300 L1098 311" stroke="#6a6a6a" stroke-width="1.5"/><rect x="1122.5" y="300.5" width="11" height="10" fill="none" stroke="#606060" stroke-width="1"/><path d="M1125 305 H1131" stroke="#606060"/><path d="M1147 300 H1158 V311 H1150 L1147 308 Z" fill="#e8e8e8"/><path d="M1147 307 H1151 V311" stroke="#535353" stroke-width="1" fill="none"/><path d="M1170 302 H1182 M1174 302 V300 H1178 V302 M1171.5 303.5 H1180.5 L1180 311 H1172 Z M1174.5 305 V310 M1177.5 305 V310" stroke="#cfcfcf" stroke-width="1.1" fill="none"/></svg>
<div class="a" style="left:992px;top:315px;width:216px;height:1px;background:#3e3e3e"></div>
<div class="a" style="left:1090px;top:317px;width:18px;height:2px;background:repeating-linear-gradient(90deg,#3d3d3d 0 1px,transparent 1px 2px)"></div>
<div class="a" style="left:889px;top:341px;width:324px;height:317px;background:#535353;border:1px solid #3c3c3c;border-radius:3px 3px 0 0"></div>
<div class="a" style="left:890px;top:342px;width:322px;height:12px;background:#474747;border-radius:2px 2px 0 0"></div>
<div class="a" style="left:890px;top:354px;width:322px;height:25px;background:#474747"></div>
<div class="a" style="left:890px;top:354px;width:40px;height:25px;background:#535353"></div>
<svg style="left:1182px;top:345px" width="8" height="6"><path d="M3.5 0.5 L0.5 3 L3.5 5.5 Z M7 0.5 L4 3 L7 5.5 Z" fill="#d0d0d0"/></svg>
<svg style="left:1200px;top:344px" width="8" height="8"><path d="M1 1 L7 7 M7 1 L1 7" stroke="#d8d8d8" stroke-width="1.7"/></svg>
<div class="t" style="left:898px;top:362px;font-size:9.4px;font-weight:bold;color:#e6e6e6;letter-spacing:-0.2px">Слои</div>
<div class="a" style="left:1197px;top:363px;width:10px;height:1px;background:#b0b0b0;box-shadow:0 3px 0 #b0b0b0,0 6px 0 #b0b0b0"></div>
<div class="a" style="left:895px;top:385px;width:312px;height:246px;border:1px solid #5b5b5b"></div>
<div class="a" style="left:896px;top:405px;width:310px;height:1px;background:#4b4b4b"></div>
<div class="a" style="left:896px;top:425px;width:310px;height:1px;background:#4b4b4b"></div>
<div class="a" style="left:896px;top:445px;width:310px;height:1px;background:#4b4b4b"></div>
<div class="a" style="left:915px;top:386px;width:1px;height:59px;background:#4b4b4b"></div>
<div class="a" style="left:935px;top:386px;width:1px;height:59px;background:#4b4b4b"></div>
<div class="a" style="left:1174px;top:386px;width:1px;height:59px;background:#4b4b4b"></div>
<svg style="left:0;top:0" width="1" height="1"><path d="M898 395 C901 390.5 908 390.5 911 395 C908 399.5 901 399.5 898 395 Z" fill="#b8b8b8"/><circle cx="904.5" cy="395" r="2.3" fill="#606060"/><circle cx="1183" cy="395" r="3.6" fill="none" stroke="#c8c8c8" stroke-width="1.2"/><rect x="936.5" y="387" width="2.5" height="16" fill="#4a7fe0"/><path d="M898 415 C901 410.5 908 410.5 911 415 C908 419.5 901 419.5 898 415 Z" fill="#b8b8b8"/><circle cx="904.5" cy="415" r="2.3" fill="#606060"/><circle cx="1183" cy="415" r="3.6" fill="none" stroke="#c8c8c8" stroke-width="1.2"/><rect x="936.5" y="407" width="2.5" height="16" fill="#4a7fe0"/><path d="M898 435 C901 430.5 908 430.5 911 435 C908 439.5 901 439.5 898 435 Z" fill="#b8b8b8"/><circle cx="904.5" cy="435" r="2.3" fill="#606060"/><circle cx="1183" cy="435" r="3.6" fill="none" stroke="#c8c8c8" stroke-width="1.2"/><rect x="936.5" y="427" width="2.5" height="16" fill="#4a7fe0"/><path d="M920.5 433 V431 A3.5 3.5 0 0 1 927.5 431 V433" fill="none" stroke="#cfcfcf" stroke-width="1.3"/><rect x="919.5" y="433" width="9" height="7" fill="#cfcfcf"/><rect x="923.5" y="435" width="1.3" height="2.5" fill="#535353"/><path d="M946 393 L950 397 L954 393" fill="none" stroke="#d0d0d0" stroke-width="1.5"/><path d="M1201 386 H1207 V392 Z" fill="#e0e0e0"/></svg>
<div class="a" style="left:962px;top:386px;width:18px;height:18px;background:#fff;border:1px solid #222"></div>
<div class="a" style="left:968px;top:390px;width:8px;height:8px;border-radius:50%;background:#58980f"></div>
<div class="t" style="left:984px;top:391px;font-size:9.4px;color:#d0d0d0">Слой 1</div>
<div class="a" style="left:984px;top:406px;width:18px;height:18px;background:#fff;border:1px solid #222;overflow:hidden"><div class="a" style="left:0px;top:0px;width:16px;height:16px;border-radius:50%;background:#58980f"></div></div>
<div class="t" style="left:1006px;top:411px;font-size:9px;font-weight:bold;color:#cacaca">&lt;Контур&gt;</div>
<div class="a" style="left:984px;top:426px;width:18px;height:18px;background:#f8f8f8;border:1px solid #222"></div>
<div class="t" style="left:1006px;top:431px;font-size:9px;font-weight:bold;color:#cacaca">&lt;Прямоугольник&gt;</div>
<div class="t" style="left:895px;top:636px;font-size:9.4px;color:#b0b0b0">1 слой</div>
<svg style="left:0;top:0" width="1" height="1"><path d="M1055 637 V646 H1065 V642 M1059 641 L1066 634 M1062 634 H1066 V638" stroke="#5e5e5e" stroke-width="1.2" fill="none"/><circle cx="1086" cy="638" r="3.8" fill="none" stroke="#5e5e5e" stroke-width="1.3"/><path d="M1083 641 L1079 646" stroke="#5e5e5e" stroke-width="1.5"/><rect x="1103.5" y="636.5" width="9" height="9" fill="none" stroke="#5e5e5e"/><rect x="1106" y="639" width="4" height="4" fill="#5e5e5e"/><path d="M1125 640 H1129 V645 M1130 637 H1139 V646 H1131 Z" stroke="#5e5e5e" stroke-width="1.2" fill="none"/><path d="M1152 635 H1162 V646 H1155 L1152 643 Z" fill="#e8e8e8"/><path d="M1152 642 H1156 V646" stroke="#535353" stroke-width="1" fill="none"/><path d="M1175 637 H1187 M1179 637 V635 H1183 V637 M1176.5 638.5 H1185.5 L1185 646 H1177 Z" stroke="#5e5e5e" stroke-width="1.1" fill="none"/></svg>
<div class="a" style="left:890px;top:649px;width:322px;height:1px;background:#3c3c3c"></div>
<div class="a" style="left:1042px;top:652px;width:18px;height:2px;background:repeating-linear-gradient(90deg,#3d3d3d 0 1px,transparent 1px 2px)"></div>
<svg style="left:1224px;top:92px" width="7" height="5"><path d="M0.5 4 L4 0.5 L7.5 4" stroke="#c8c8c8" stroke-width="1.3" fill="none"/></svg>
<div class="a" style="left:1224px;top:364px;width:9px;height:22px;background:#5c5c5c;border-radius:4px"></div>
<svg style="left:1224px;top:656px" width="7" height="5"><path d="M0.5 0.5 L4 4 L7.5 0.5" stroke="#aaa" stroke-width="1.2" fill="none"/></svg>
<svg style="left:0;top:0" width="1" height="1"><path d="M313 517.6 L335 517.3 L362 516.2 L385 515.8" fill="none" stroke="#6f8fd6" stroke-width="1.7" stroke-dasharray="0"/><path d="M362 517.5 C370 518 380 518.5 392 519" fill="none" stroke="#6f8fd6" stroke-width="1.2" stroke-dasharray="0"/><path d="M362 516 C380 513 395 512 420 511 C450 509.5 480 507 522 505.4 C550 503 575 501 608 502" fill="none" stroke="#6f8fd6" stroke-width="1.4" stroke-dasharray="1.4 1.3"/><path d="M362 518 C400 518 430 517 470 514 C500 511 540 507 575 505" fill="none" stroke="#6f8fd6" stroke-width="1.4" stroke-dasharray="1.4 1.5"/><path d="M375 518.5 C395 521 420 525 460 528 C490 531 520 531.6 560 531.6 L610 530.6 C625 527 638 522 650 514 C657 510 660 505 655 502.5 L608 502.3" fill="none" stroke="#6f8fd6" stroke-width="1.4" stroke-dasharray="1.4 1.4"/><path d="M608 502 L609 522 L594 530.6" fill="none" stroke="#6f8fd6" stroke-width="1.4" stroke-dasharray="1.2 1"/><path d="M390 538.6 L336 538.4 C331 539 331 546 338 548 L380 548.3" fill="none" stroke="#6f8fd6" stroke-width="1.4" stroke-dasharray="0"/><path d="M600 536.3 C560 537 520 537.5 500 538.5 C470 539 440 538.5 400 538.8 L336 538.4 C331 539 331 546 338 548 L430 548.5 C455 547.5 470 544 500 540.5 C540 537 570 536.8 600 536.3 L603 540 L604 559.6 L590.5 569.6 L565 572.9" fill="none" stroke="#6f8fd6" stroke-width="1.4" stroke-dasharray="1.4 1.3"/><path d="M589 558 C591 557 592 559 591 560 L583 567 L581 565 Z" fill="#111"/><path d="M580.5 565.5 L583.5 568 C582 571 579 572.5 576 572.5 C577 570 578 567 580.5 565.5 Z" fill="#111"/></svg>
<div class="a" style="left:64px;top:666px;width:1167px;height:3px;background:#3a3a3a"></div>
<div class="a" style="left:0;top:0;width:1231px;height:669px;pointer-events:none;background:linear-gradient(to bottom,rgba(0,0,0,0) 0,rgba(0,0,0,0) 430px,rgba(0,0,0,0.25) 669px)"></div>
</body></html>
